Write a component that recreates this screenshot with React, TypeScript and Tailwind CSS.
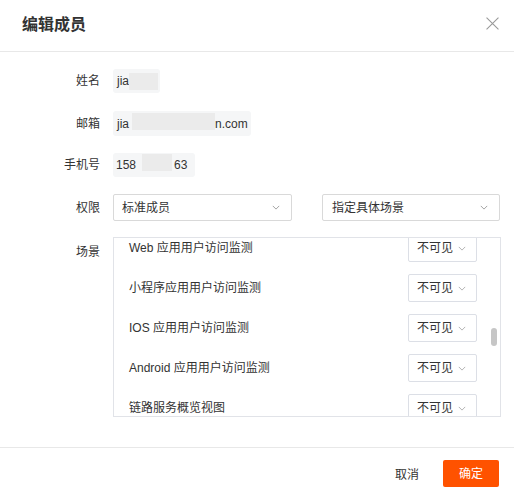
import React from 'react'

const scenes = [
  'Web 应用用户访问监测',
  '小程序应用用户访问监测',
  'IOS 应用用户访问监测',
  'Android 应用用户访问监测',
  '链路服务概览视图',
]

function Chevron({ className = '' }: { className?: string }) {
  return (
    <svg viewBox="0 0 10 6" className={className} fill="none" stroke="currentColor" strokeWidth="1.1">
      <path d="M1 1l4 4 4-4" />
    </svg>
  )
}

function Label({ children }: { children: React.ReactNode }) {
  return <div className="w-[100px] shrink-0 pr-[0px] text-right text-[12px] text-[#333]">{children}</div>
}

function Blur({ w }: { w: number }) {
  return <span className="inline-block h-[17px] bg-[#ebebeb]" style={{ width: w }} />
}

export default function App() {
  return (
    <div
      className="relative h-[496px] w-[514px] overflow-hidden bg-white text-[#333]"
      style={{ fontFamily: '"Liberation Sans", "Noto Sans CJK SC", sans-serif' }}
    >
      {/* header */}
      <div className="flex h-[52px] items-center justify-between border-b border-[#e8e8e8] pl-[22px] pr-[15px]">
        <div className="pb-[2px] text-[16px] font-bold text-[#333]">编辑成员</div>
        <svg viewBox="0 0 12 12" className="mb-[4px] h-[13px] w-[13px] text-[#999]" fill="none" stroke="currentColor" strokeWidth="1">
          <path d="M0.5 0.5l11 11M11.5 0.5l-11 11" />
        </svg>
      </div>

      {/* body */}
      <div className="pt-[17px]">
        <div className="mb-[18px] flex items-center gap-[13px]">
          <Label>姓名</Label>
          <div className="flex h-[24px] w-[47px] items-center rounded-[3px] bg-[#f5f6f7] pl-[4px] text-[12px]">
            <span>jia</span>
            <Blur w={29} />
          </div>
        </div>
        <div className="mb-[17px] flex items-center gap-[13px]">
          <Label>邮箱</Label>
          <div className="flex h-[25px] w-[138px] items-center rounded-[3px] bg-[#f5f6f7] pl-[4px] text-[12px]">
            <span>jia</span>
            <span className="ml-[3px]"><Blur w={83} /></span>
            <span>n.com</span>
          </div>
        </div>
        <div className="mb-[17px] flex items-center gap-[13px]">
          <Label>手机号</Label>
          <div className="flex h-[24px] w-[82px] items-center rounded-[3px] bg-[#f5f6f7] pl-[3px] text-[12px]">
            <span>158</span>
            <span className="ml-[6px]"><Blur w={30} /></span>
            <span className="ml-[2px]">63</span>
          </div>
        </div>
        <div className="mb-[16px] flex items-center gap-[13px]">
          <Label>权限</Label>
          <div className="flex h-[27px] w-[179px] items-center justify-between rounded-[2px] border border-[#d9d9d9] pl-[8px] pr-[11px] text-[12px]">
            <span>标准成员</span>
            <Chevron className="h-[5px] w-[8px] text-[#999]" />
          </div>
          <div className="ml-[17px] flex h-[27px] w-[178px] items-center justify-between rounded-[2px] border border-[#d9d9d9] pl-[9px] pr-[11px] text-[12px]">
            <span>指定具体场景</span>
            <Chevron className="h-[5px] w-[8px] text-[#999]" />
          </div>
        </div>
        <div className="flex items-start gap-[13px]">
          <div className="pt-[6px]">
            <Label>场景</Label>
          </div>
          <div className="relative h-[180px] w-[388px] overflow-hidden border border-[#e1e3e8]">
            <div className="-mt-[4px] flex flex-col gap-[12px] pl-[15px] pr-[23px]">
              {scenes.map((s) => (
                <div key={s} className="flex h-[28px] items-center justify-between">
                  <span className="text-[12px] text-[#333]">{s}</span>
                  <div className="flex h-[28px] w-[69px] items-center gap-[5px] rounded-[2px] border border-[#dcdfe6] pl-[8px] text-[12px]">
                    <span>不可见</span>
                    <Chevron className="h-[5px] w-[8px] text-[#aaa]" />
                  </div>
                </div>
              ))}
            </div>
            <div className="absolute right-[3px] top-[90px] h-[18px] w-[6px] rounded-full bg-[#c6c6c6]" />
          </div>
        </div>
      </div>

      {/* footer */}
      <div className="absolute inset-x-0 top-[447px] flex items-start justify-end gap-[24px] border-t border-[#e8e8e8] pr-[15px] pt-[12px]">
        <button className="mt-[6px] text-[12px] text-[#333]">取消</button>
        <button className="flex h-[27px] w-[56px] items-center justify-center rounded-[2px] bg-[#ff5200] text-[12px] text-white">
          确定
        </button>
      </div>
    </div>
  )
}
